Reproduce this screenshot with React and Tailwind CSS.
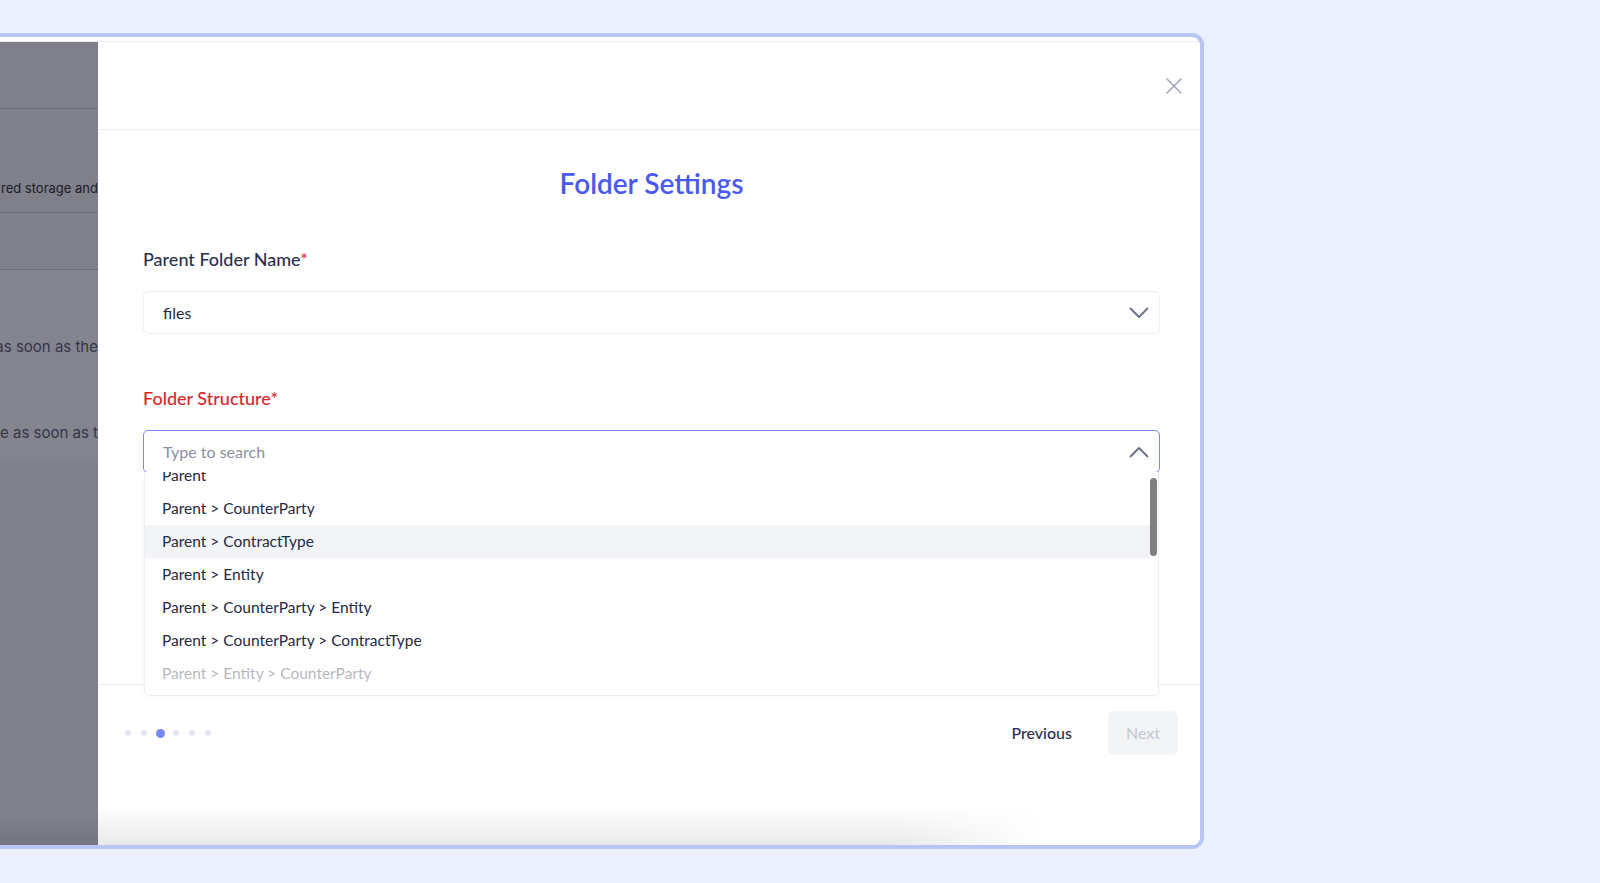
import { useState } from 'react'

const options = [
  'Parent',
  'Parent > CounterParty',
  'Parent > ContractType',
  'Parent > Entity',
  'Parent > CounterParty > Entity',
  'Parent > CounterParty > ContractType',
  'Parent > Entity > CounterParty',
]

function Chevron({ up }) {
  return (
    <svg width="20" height="12" viewBox="0 0 20 12" fill="none" className="shrink-0">
      <path d={up ? 'M1.5 10.5 L10 2 L18.5 10.5' : 'M1.5 1.5 L10 10 L18.5 1.5'} stroke="#6b6e85" strokeWidth="1.8" strokeLinecap="round" strokeLinejoin="round" />
    </svg>
  )
}

function BackdropPage() {
  return (
    <div className="w-[114px] shrink-0 bg-[#7f808a] flex flex-col font-['Inter',sans-serif] overflow-hidden">
      <div className="h-[67px] border-b border-[#6f707a]" />
      <div className="h-[104px] border-b border-[#6f707a] pt-[69px] flex justify-end">
        <span className="text-[13px] leading-[20px] text-[#1a1c28] whitespace-nowrap">red storage and</span>
      </div>
      <div className="h-[57px] border-b border-[#6f707a]" />
      <div className="h-[190px] bg-[#83848e] flex flex-col items-end">
        <span className="mt-[66px] text-[15px] leading-[22px] text-[#33354a] whitespace-nowrap">as soon as the</span>
        <span className="mt-[64px] text-[15px] leading-[22px] text-[#33354a] whitespace-nowrap">e as soon as t</span>
      </div>
      <div className="flex-1 flex flex-col">
        <div className="mt-auto h-[30px] bg-gradient-to-b from-[#7f808a] to-[#747580]" />
      </div>
    </div>
  )
}

function StructureDropdown() {
  const [active] = useState(2)
  return (
    <div className="absolute left-0 right-0 top-full h-[224px] z-10 bg-white border border-t-0 border-[#eceef2] rounded-b-[5px] shadow-[0_2px_4px_rgba(0,0,0,0.03)] overflow-hidden flex">
      <div className="flex-1 -mt-[13px]">
        {options.map((o, i) => (
          <div key={o} className={'h-[33px] flex items-center pl-[17px] text-[15.5px] text-[#252a45] ' + (i === active ? 'bg-[#f3f4f7]' : '')}>
            {o}
          </div>
        ))}
      </div>
      <div className="w-[8px] shrink-0 pt-[6px]">
        <div className="w-[7px] h-[78px] rounded-full bg-[#7f7f7f]" />
      </div>
      <div className="absolute left-0 right-0 bottom-0 h-[45px] bg-gradient-to-b from-white/55 to-white/75" />
    </div>
  )
}

export default function App() {
  const step = 2
  return (
    <div className="w-[1600px] h-[883px] overflow-hidden bg-[#eaf0fd] pt-[33px]">
      <div className="ml-[-20px] w-[1224px] h-[816px] border-4 border-[#b7c5f3] rounded-r-[12px] bg-white pt-[4px] overflow-hidden">
        <div className="flex h-full border-t border-[#eceef3]">
          <BackdropPage />

          <div className="flex-1 flex flex-col font-['Lato',sans-serif]">
            <div className="h-[88px] shrink-0 border-b border-[#eef0f4] flex items-center justify-end pr-[18px]">
              <svg width="16" height="16" viewBox="0 0 16 16" fill="none">
                <path d="M1 1 L15 15 M15 1 L1 15" stroke="#9ea6b6" strokeWidth="1.5" strokeLinecap="round" />
              </svg>
            </div>

            <div className="h-[554px] shrink-0 pl-[45px] pr-[40px] pt-[37px]">
              <h2 className="text-center text-[28px] leading-[32px] font-semibold text-[#4a5af0]">Folder Settings</h2>

              <div className="mt-[48px] text-[18px] leading-[24px] font-medium text-[#2b2f4e]">
                Parent Folder Name<span className="text-[#e0353b]">*</span>
              </div>
              <div className="mt-[20px] h-[43px] border border-[#eceef2] rounded-[5px] flex items-center justify-between pl-[19px] pr-[10px]">
                <span className="text-[16px] text-[#252a45]">files</span>
                <Chevron />
              </div>

              <div className="mt-[52px] text-[18px] leading-[24px] font-medium text-[#d9262c]">
                Folder Structure*
              </div>
              <div className="relative mt-[20px] h-[43px] border-[1.5px] border-[#7c86f6] rounded-[5px] flex items-center justify-between pl-[19px] pr-[10px]">
                <span className="text-[16px] text-[#8b8fa0]">Type to search</span>
                <Chevron up />
                <StructureDropdown />
              </div>
            </div>

            <div className="flex-1 flex flex-col border-t border-[#eef0f4]">
              <div className="mt-[26px] h-[44px] flex items-center justify-between pl-[22px] pr-[22px]">
                <div className="flex items-center">
                  {[0, 1, 2, 3, 4, 5].map((i) => (
                    <div key={i} className="w-[16px] flex justify-center">
                      <div className={i === step ? 'w-[9px] h-[9px] rounded-full bg-[#7b86f5]' : 'w-[6px] h-[6px] rounded-full bg-[#e4e5ee]'} />
                    </div>
                  ))}
                </div>
                <div className="flex items-center gap-[18px]">
                  <button className="h-[44px] px-[18px] text-[16px] font-medium text-[#2b2f4e]">Previous</button>
                  <button className="h-[44px] w-[70px] rounded-[6px] bg-[#f3f4f6] text-[16px] font-medium text-[#c8cad3]">Next</button>
                </div>
              </div>
              <div className="mt-auto h-[40px] relative bg-gradient-to-b from-white to-[#e9e9e9]">
                <div className="absolute inset-0 bg-[linear-gradient(to_right,transparent_0%,transparent_72%,white_86%)]" />
              </div>
            </div>
          </div>
        </div>
      </div>
    </div>
  )
}
